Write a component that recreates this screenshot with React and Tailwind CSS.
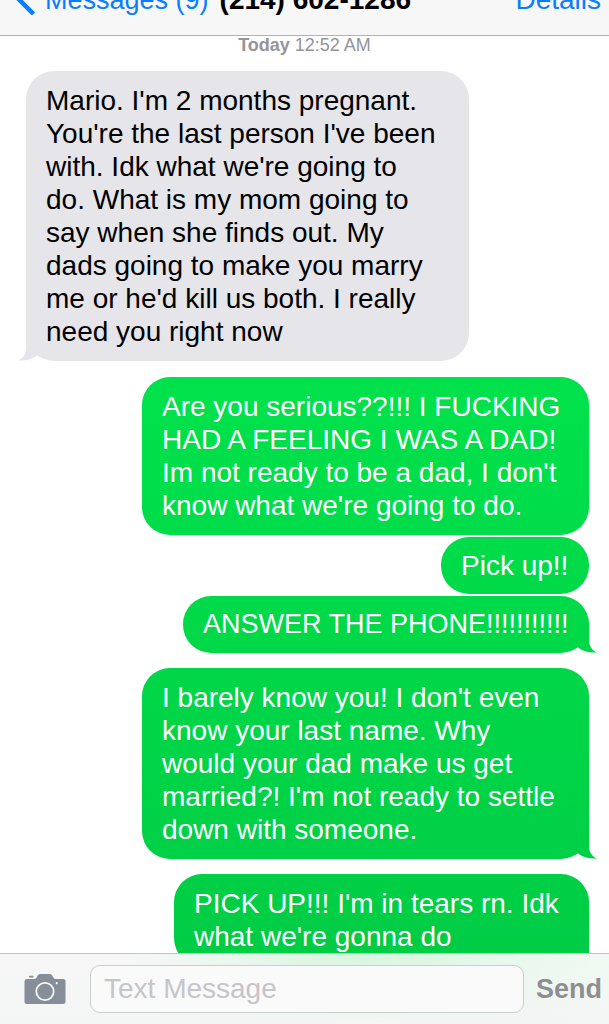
import React from "react";

const messages = [
  {
    from: "them",
    tail: "-left-2 text-[#e5e5ea]",
    box: "w-[443px] text-[28px]",
    lines: [
      "Mario. I'm 2 months pregnant.",
      "You're the last person I've been",
      "with. Idk what we're going to",
      "do. What is my mom going to",
      "say when she finds out. My",
      "dads going to make you marry",
      "me or he'd kill us both. I really",
      "need you right now",
    ],
  },
  {
    from: "me",
    box: "w-[447px] mt-4 text-[28px]",
    lines: [
      "Are you serious??!!! I FUCKING",
      "HAD A FEELING I WAS A DAD!",
      "Im not ready to be a dad, I don't",
      "know what we're going to do.",
    ],
  },
  { from: "me", box: "w-[148px] mt-0.5 text-[28px]", lines: ["Pick up!!"] },
  {
    from: "me",
    tail: "-right-2 -scale-x-100 text-[#00d849]",
    box: "w-[406px] mt-0.5 text-[27px]",
    lines: ["ANSWER THE PHONE!!!!!!!!!!!"],
  },
  {
    from: "me",
    tail: "-right-2 -scale-x-100 text-[#00d046]",
    box: "w-[447px] mt-[15px] text-[28px]",
    lines: [
      "I barely know you! I don't even",
      "know your last name. Why",
      "would your dad make us get",
      "married?! I'm not ready to settle",
      "down with someone.",
    ],
  },
  {
    from: "me",
    tail: "-right-2 -scale-x-100 text-[#00cd45]",
    box: "w-[415px] mt-[15px] text-[28px]",
    lines: ["PICK UP!!! I'm in tears rn. Idk", "what we're gonna do"],
  },
];

function Tail({ look }) {
  return (
    <svg
      viewBox="0 0 28 31"
      aria-hidden="true"
      className={`absolute bottom-0 h-[31px] w-7 ${look}`}
    >
      <path
        fill="currentColor"
        d="M8 0V18C8 24 5 28.500 0 30.500C8 31 14 29.500 19 25.500L24 24L12 0Z"
      />
    </svg>
  );
}

function Bubble({ from, tail, box, lines }) {
  const tone =
    from === "me"
      ? "self-end text-white bg-linear-to-b from-[#00f050] to-[#00ca44] bg-fixed"
      : "self-start text-black bg-[#e5e5ea]";
  const pad = lines.length > 1 ? "py-[13px]" : "py-3";
  return (
    <li className={`relative max-w-full shrink-0 rounded-[28px] px-5 ${pad} ${box} ${tone}`}>
      {tail && <Tail look={tail} />}
      <p className="relative leading-[33px] whitespace-pre">{lines.join("\n")}</p>
    </li>
  );
}

function CameraIcon() {
  return (
    <svg viewBox="0 0 42 32" className="h-8 w-[42px]" aria-hidden="true">
      <path
        fill="#858e99"
        d="M2.500 6H10.500C13 6 13.500 1 16 1H26C28.500 1 29 6 31.500 6H39Q41.500 6 41.500 8.500V28.500Q41.500 31 39 31H3Q.5 31 .5 28.500V8.500Q.5 6 2.500 6Z"
      />
      <rect x="5" y="2.800" width="4.500" height="1.700" rx=".7" fill="#858e99" />
      <circle cx="21" cy="18.500" r="8.700" fill="none" stroke="#f7f7f8" strokeWidth="1.800" />
      <circle cx="32.700" cy="10.200" r="1.100" fill="#f7f7f8" />
    </svg>
  );
}

export default function App() {
  return (
    <div className="flex h-screen flex-col overflow-hidden bg-white font-['Liberation_Sans',Arial,sans-serif]">
      <header className="flex h-9 shrink-0 items-end justify-between overflow-hidden border-b border-[#b2b2b4] bg-[#f7f7f7] pr-2 pb-5 pl-[13px] text-[28px] leading-[30px] whitespace-nowrap">
        <div className="flex items-end gap-[11px]">
          <a href="#messages" className="flex items-end gap-2.5 text-[27px] text-[#087eff]">
            <svg viewBox="0 0 22 36" className="h-9 w-[22px]" aria-hidden="true">
              <path d="M20.500 2L4 18.500L20.500 35" fill="none" stroke="currentColor" strokeWidth="4.500" />
            </svg>
            Messages (9)
          </a>
          <h1 className="font-bold text-black">(214) 602-1286</h1>
        </div>
        <a href="#details" className="text-[#087eff]">Details</a>
      </header>

      <main className="min-h-0 flex-1 overflow-hidden">
        <p className="text-center text-[18px] leading-[18px] text-[#949499]">
          <span className="font-bold">Today</span> 12:52 AM
        </p>
        <ul className="flex flex-col pt-[17px] pr-5 pl-[26px]">
          {messages.map((message, index) => (
            <Bubble key={index} {...message} />
          ))}
        </ul>
      </main>

      <footer className="shrink-0 border-t border-[#bfc4c1] bg-linear-to-r from-[#f7f7f8] from-20% via-[#d6f6df] via-60% to-[#f1faf3]">
        <form
          className="flex items-center bg-linear-to-b from-[#f6f7f7]/0 to-[#f4f5f5] py-[11px] pr-[7px] pl-6"
          onSubmit={(event) => event.preventDefault()}
        >
          <button type="button" aria-label="Camera" className="mr-6 shrink-0">
            <CameraIcon />
          </button>
          <input
            type="text"
            aria-label="Text Message"
            placeholder="Text Message"
            className="h-12 min-w-0 flex-1 rounded-[10px] border border-[#c9d0cc] bg-[#fafafa] px-[13px] text-[28px] text-black outline-none placeholder:text-[#c5c5ca]"
          />
          <button type="submit" className="ml-3 shrink-0 text-[27px] font-bold text-[#8e8e93]">
            Send
          </button>
        </form>
      </footer>
    </div>
  );
}
